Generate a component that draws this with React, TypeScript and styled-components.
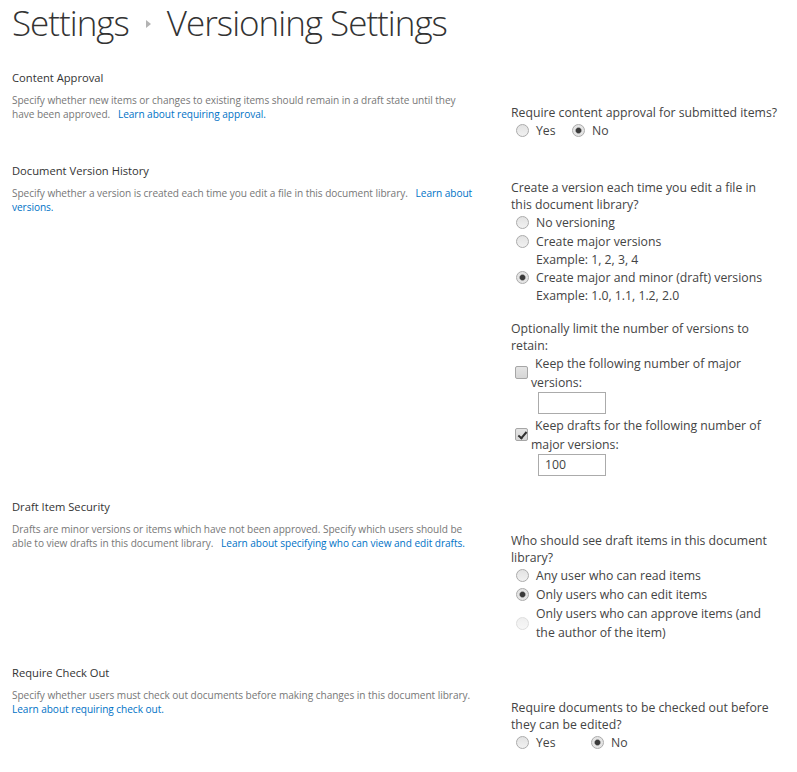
import React from "react";
import styled, { createGlobalStyle } from "styled-components";

const GlobalStyle = createGlobalStyle`
  html, body { margin: 0; padding: 0; background: #ffffff; }
  body {
    font-family: "Open Sans", "Noto Sans", "Liberation Sans", sans-serif;
    color: #444444;
  }
`;

const Page = styled.div`
  width: 797px;
  box-sizing: border-box;
  padding: 0 12px 20px 12px;
`;

const Title = styled.h1`
  margin: 0;
  display: flex;
  align-items: center;
  font-weight: 300;
  font-size: 35px;
  letter-spacing: -1px;
  line-height: 46px;
  color: #333333;
`;

const CrumbArrow = styled.span`
  display: inline-block;
  width: 0;
  height: 0;
  border-left: 5px solid #b3b3b3;
  border-top: 4px solid transparent;
  border-bottom: 4px solid transparent;
  margin: 2px 16px 0 17px;
`;

const Form = styled.div`
  margin-top: 23px;
`;

const Section = styled.section<{ $bottom?: number }>`
  display: grid;
  grid-template-columns: 499px 268px;
  padding-bottom: ${(p) => p.$bottom ?? 22}px;
`;

const Left = styled.div`
  max-width: 466px;
`;

const Heading = styled.h3`
  margin: 0;
  font-size: 11.2px;
  font-weight: 400;
  line-height: 18px;
  color: #333333;
`;

const Description = styled.p`
  margin: 6px 0 0 0;
  font-size: 10.1px;
  letter-spacing: -0.05px;
  line-height: 14px;
  color: #777777;
`;

const Link = styled.a`
  color: #0072c6;
  text-decoration: none;
`;

const Right = styled.div<{ $top: number }>`
  padding-top: ${(p) => p.$top}px;
  font-size: 12.25px;
  color: #444444;
`;

const Question = styled.div<{ $gap?: number }>`
  line-height: 17px;
  margin-top: ${(p) => p.$gap ?? 0}px;
`;

const OptionRow = styled.label`
  display: grid;
  grid-template-columns: 25px 1fr;
  align-items: center;
  line-height: 19px;
`;

const InlineOptions = styled.div`
  display: flex;
  line-height: 19px;
`;

const InlineOption = styled.label<{ $width?: number }>`
  display: grid;
  grid-template-columns: 25px auto;
  align-items: center;
  width: ${(p) => (p.$width ? `${p.$width}px` : "auto")};
`;

const Example = styled.div`
  padding-left: 25px;
  line-height: 17px;
`;

const RadioInput = styled.input.attrs({ type: "radio" })`
  appearance: none;
  -webkit-appearance: none;
  margin: 0 0 0 5px;
  width: 13px;
  height: 13px;
  box-sizing: border-box;
  border-radius: 50%;
  border: 1px solid #ababab;
  background: linear-gradient(#e2e2e2, #f1f1f1);
  &:checked {
    background: radial-gradient(circle, #3a3a3a 0 2.2px, #8c8c8c 2.8px, #e4e4e4 3.6px);
  }
  &:disabled {
    border-color: #dedede;
    background: linear-gradient(#efefef, #f7f7f7);
  }
`;

const CheckRow = styled.label`
  display: grid;
  grid-template-columns: 20px 1fr;
  align-items: center;
  line-height: 19px;
`;

const CheckInput = styled.input.attrs({ type: "checkbox" })`
  appearance: none;
  -webkit-appearance: none;
  position: relative;
  margin: 0 0 0 4px;
  width: 13px;
  height: 13px;
  box-sizing: border-box;
  border-radius: 2px;
  border: 1px solid #a6a6a6;
  background: linear-gradient(#e4e4e4, #d6d6d6);
  &:checked::after {
    content: "";
    position: absolute;
    left: 3.5px;
    top: 0.5px;
    width: 3px;
    height: 7px;
    border-right: 2px solid #2f2f2f;
    border-bottom: 2px solid #2f2f2f;
    transform: rotate(40deg);
  }
`;

const CheckText = styled.span`
  text-indent: 4px;
`;

const NumberBox = styled.input.attrs({ type: "text" })<{ $after?: number }>`
  display: block;
  box-sizing: border-box;
  margin: 0 0 ${(p) => p.$after ?? 0}px 27px;
  width: 68px;
  height: 22px;
  padding: 0 6px;
  border: 1px solid #ababab;
  border-radius: 0;
  font-family: inherit;
  font-size: 12.25px;
  color: #444444;
  outline: none;
`;

const gap = "\u00a0\u00a0 ";

export default function App() {
  return (
    <>
      <GlobalStyle />
      <Page>
        <Title>
          <span>Settings</span>
          <CrumbArrow aria-hidden="true" />
          <span>Versioning Settings</span>
        </Title>
        <Form>
          <Section>
            <Left>
              <Heading>Content Approval</Heading>
              <Description>
                Specify whether new items or changes to existing items should remain in a draft state until they
                have been approved.{gap}
                <Link href="#">Learn about requiring approval.</Link>
              </Description>
            </Left>
            <Right $top={35}>
              <Question>Require content approval for submitted items?</Question>
              <InlineOptions>
                <InlineOption $width={56}>
                  <RadioInput name="approval" />
                  <span>Yes</span>
                </InlineOption>
                <InlineOption>
                  <RadioInput name="approval" defaultChecked />
                  <span>No</span>
                </InlineOption>
              </InlineOptions>
            </Right>
          </Section>

          <Section $bottom={22}>
            <Left>
              <Heading>Document Version History</Heading>
              <Description>
                Specify whether a version is created each time you edit a file in this document library.{gap}
                <Link href="#">Learn about versions.</Link>
              </Description>
            </Left>
            <Right $top={16.5}>
              <Question>Create a version each time you edit a file in this document library?</Question>
              <OptionRow>
                <RadioInput name="versioning" />
                <span>No versioning</span>
              </OptionRow>
              <OptionRow>
                <RadioInput name="versioning" />
                <span>Create major versions</span>
              </OptionRow>
              <Example>Example: 1, 2, 3, 4</Example>
              <OptionRow>
                <RadioInput name="versioning" defaultChecked />
                <span>Create major and minor (draft) versions</span>
              </OptionRow>
              <Example>Example: 1.0, 1.1, 1.2, 2.0</Example>
              <Question $gap={16}>Optionally limit the number of versions to retain:</Question>
              <CheckRow>
                <CheckInput />
                <CheckText>Keep the following number of major versions:</CheckText>
              </CheckRow>
              <NumberBox defaultValue="" $after={2} />
              <CheckRow>
                <CheckInput defaultChecked />
                <CheckText>Keep drafts for the following number of major versions:</CheckText>
              </CheckRow>
              <NumberBox defaultValue="100" />
            </Right>
          </Section>

          <Section>
            <Left>
              <Heading>Draft Item Security</Heading>
              <Description>
                Drafts are minor versions or items which have not been approved. Specify which users should be
                able to view drafts in this document library.{gap}
                <Link href="#">Learn about specifying who can view and edit drafts.</Link>
              </Description>
            </Left>
            <Right $top={34.5}>
              <Question>Who should see draft items in this document library?</Question>
              <OptionRow>
                <RadioInput name="drafts" />
                <span>Any user who can read items</span>
              </OptionRow>
              <OptionRow>
                <RadioInput name="drafts" defaultChecked />
                <span>Only users who can edit items</span>
              </OptionRow>
              <OptionRow>
                <RadioInput name="drafts" disabled />
                <span>Only users who can approve items (and the author of the item)</span>
              </OptionRow>
            </Right>
          </Section>

          <Section>
            <Left>
              <Heading>Require Check Out</Heading>
              <Description>
                Specify whether users must check out documents before making changes in this document library.{gap}
                <Link href="#">Learn about requiring check out.</Link>
              </Description>
            </Left>
            <Right $top={34.5}>
              <Question>Require documents to be checked out before they can be edited?</Question>
              <InlineOptions>
                <InlineOption $width={75}>
                  <RadioInput name="checkout" />
                  <span>Yes</span>
                </InlineOption>
                <InlineOption>
                  <RadioInput name="checkout" defaultChecked />
                  <span>No</span>
                </InlineOption>
              </InlineOptions>
            </Right>
          </Section>
        </Form>
      </Page>
    </>
  );
}
